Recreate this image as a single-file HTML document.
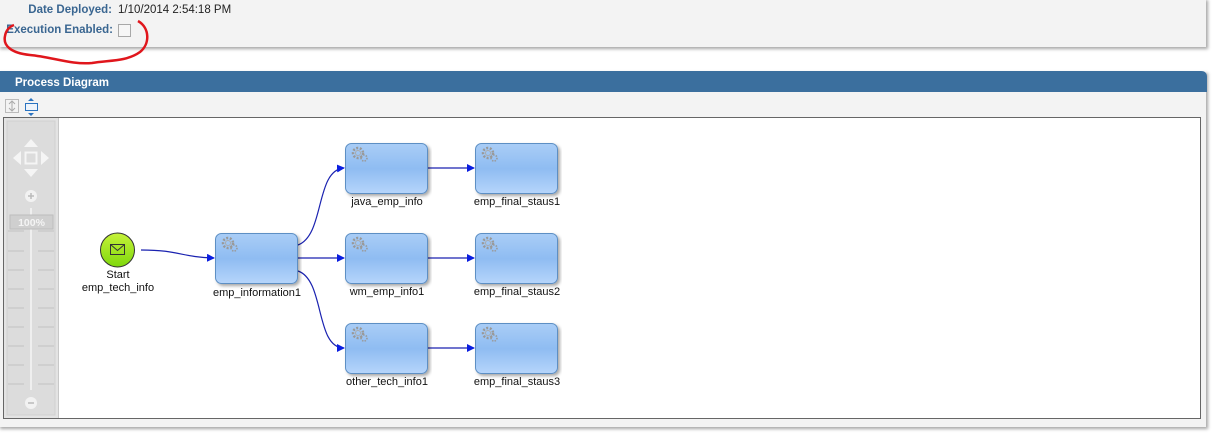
<!DOCTYPE html>
<html><head><meta charset="utf-8"><style>
html,body{margin:0;padding:0;background:#fff;width:1214px;height:444px;overflow:hidden;font-family:"Liberation Sans",Tahoma,sans-serif;}
</style></head><body>
<svg width="1214" height="444" viewBox="0 0 1214 444" xmlns="http://www.w3.org/2000/svg" style="display:block">
<defs>
<linearGradient id="bx" x1="0" y1="0" x2="0" y2="1">
<stop offset="0" stop-color="#a9cdf6"/><stop offset="0.5" stop-color="#8fbcf2"/><stop offset="1" stop-color="#b6d5fb"/></linearGradient>
<linearGradient id="gr" x1="0" y1="0" x2="0" y2="1">
<stop offset="0" stop-color="#c6f23a"/><stop offset="1" stop-color="#7fd80c"/></linearGradient>
<filter id="sh" x="-5%" y="-20%" width="110%" height="140%"><feDropShadow dx="2" dy="2" stdDeviation="1.5" flood-color="#000" flood-opacity="0.35"/></filter>
<marker id="ar" markerWidth="8" markerHeight="8" refX="7" refY="4" orient="auto" markerUnits="userSpaceOnUse"><path d="M0,0 L8,4 L0,8 Z" fill="#0a1ee0"/></marker>
<g id="gear"><circle r="5" fill="none" stroke="#999" stroke-width="2.5" stroke-dasharray="2 1.6"/><circle r="2.5" fill="none" stroke="#aaa" stroke-width="1"/><circle cx="6" cy="5" r="3" fill="none" stroke="#999" stroke-width="1.6" stroke-dasharray="1.4 1.2"/></g>
</defs>
<!-- top panel -->
<rect x="-2" y="-2" width="1208" height="49" fill="#f3f3f3" filter="url(#sh)"/>
<text x="112" y="13" font-size="11.5" font-weight="bold" fill="#3a6691" text-anchor="end">Date Deployed:</text>
<text x="118" y="13" font-size="11.5" fill="#222">1/10/2014 2:54:18 PM</text>
<text x="113" y="33" font-size="11.5" font-weight="bold" fill="#3a6691" text-anchor="end">Execution Enabled:</text>
<rect x="118.5" y="24.5" width="12" height="12" fill="#f6f6f6" stroke="#a8a8a8"/>
<path d="M138,21 C150,28 150,44 140,52 C126,62 108,60 92,63 C72,65 52,57 30,55 C10,53 3,45 5,36 C6,30 9,27 14,25" fill="none" stroke="#e0161c" stroke-width="2.5"/>
<!-- process panel -->
<rect x="-2" y="71" width="1208" height="356" fill="#f3f3f3" filter="url(#sh)"/>
<path d="M-2,71 H1201 Q1207,71 1207,77 V92 H-2 Z" fill="#3b6f9e"/>
<text x="15" y="86" font-size="11.5" font-weight="bold" fill="#fff">Process Diagram</text>
<rect x="5.5" y="99.5" width="13" height="13" fill="#f3f3f3" stroke="#bbb"/>
<path d="M12,101 V111 M9,104 l3,-3 3,3 M9,108 l3,3 3,-3" fill="none" stroke="#aaa"/>
<rect x="25.5" y="103.5" width="12" height="7" fill="#eef4fb" stroke="#2a73c0"/>
<path d="M31,98 l-3,3 h6 z M31,116 l-3,-3 h6 z" fill="#2a73c0"/>
<rect x="3.5" y="117.5" width="1197" height="301" fill="#fff" stroke="#666"/>
<rect x="4" y="118" width="55" height="300" fill="#e3e3e3"/>
<line x1="58.5" y1="118" x2="58.5" y2="418" stroke="#c8c8c8"/>
<rect x="7" y="121" width="48" height="294" fill="#dcdcdc" stroke="#d0d0d0"/>
<g fill="#f5f5f5">
<path d="M31,139 l-7,8 h14 z"/><path d="M31,177 l-7,-8 h14 z"/>
<path d="M13,158 l8,-7 v14 z"/><path d="M49,158 l-8,-7 v14 z"/>
</g>
<rect x="25.5" y="152.5" width="11" height="11" fill="none" stroke="#f5f5f5" stroke-width="2"/>
<circle cx="31" cy="196" r="6" fill="#f2f2f2"/><path d="M28,196 h6 M31,193 v6" stroke="#bbb" stroke-width="1.5"/>
<circle cx="31" cy="403" r="6" fill="#f2f2f2"/><path d="M28,403 h6" stroke="#bbb" stroke-width="1.5"/>
<line x1="31" y1="208" x2="31" y2="390" stroke="#f5f5f5" stroke-width="1.5"/>
<g stroke="#c2c2c2">
<path d="M8,251h16M38,251h16M8,270h16M38,270h16M8,289h16M38,289h16M8,308h16M38,308h16M8,327h16M38,327h16M8,346h16M38,346h16M8,365h16M38,365h16M8,384h16M38,384h16M8,231h16M38,231h16"/>
</g>
<rect x="10" y="215" width="43" height="14" fill="#cfcfcf" stroke="#bdbdbd"/>
<text x="31.5" y="226" font-size="10.5" font-weight="bold" fill="#f4f4f4" text-anchor="middle">100%</text>
<g fill="none" stroke="#1a22b0" stroke-width="1.2" marker-end="url(#ar)">
<path d="M141,250 C180,250 180,257 214,258"/>
<path d="M298,245 C325,235 315,170 344,168"/>
<path d="M298,258 H344"/>
<path d="M298,271 C325,280 315,348 344,348"/>
<path d="M428,168 H474"/>
<path d="M428,258 H474"/>
<path d="M428,348 H474"/>
</g>
<circle cx="117.5" cy="250" r="17" fill="url(#gr)" stroke="#333" stroke-width="1"/>
<rect x="110.5" y="244.5" width="14" height="10" fill="none" stroke="#333"/>
<path d="M110.5,244.5 L117.5,250.5 L124.5,244.5" fill="none" stroke="#333"/>
<g font-size="11" fill="#111" text-anchor="middle">
<text x="118" y="278">Start</text>
<text x="118" y="291">emp_tech_info</text>
</g>
<g>
<g transform="translate(215,233)"><rect x="0.5" y="0.5" width="82" height="50" rx="6" fill="url(#bx)" stroke="#5d8fc4" filter="url(#sh)"/><use href="#gear" x="13" y="10"/></g>
<g transform="translate(345,143)"><rect x="0.5" y="0.5" width="82" height="50" rx="6" fill="url(#bx)" stroke="#5d8fc4" filter="url(#sh)"/><use href="#gear" x="13" y="10"/></g>
<g transform="translate(475,143)"><rect x="0.5" y="0.5" width="82" height="50" rx="6" fill="url(#bx)" stroke="#5d8fc4" filter="url(#sh)"/><use href="#gear" x="13" y="10"/></g>
<g transform="translate(345,233)"><rect x="0.5" y="0.5" width="82" height="50" rx="6" fill="url(#bx)" stroke="#5d8fc4" filter="url(#sh)"/><use href="#gear" x="13" y="10"/></g>
<g transform="translate(475,233)"><rect x="0.5" y="0.5" width="82" height="50" rx="6" fill="url(#bx)" stroke="#5d8fc4" filter="url(#sh)"/><use href="#gear" x="13" y="10"/></g>
<g transform="translate(345,323)"><rect x="0.5" y="0.5" width="82" height="50" rx="6" fill="url(#bx)" stroke="#5d8fc4" filter="url(#sh)"/><use href="#gear" x="13" y="10"/></g>
<g transform="translate(475,323)"><rect x="0.5" y="0.5" width="82" height="50" rx="6" fill="url(#bx)" stroke="#5d8fc4" filter="url(#sh)"/><use href="#gear" x="13" y="10"/></g>
</g>
<g font-size="11" fill="#111" text-anchor="middle">
<text x="257" y="296">emp_information1</text>
<text x="387" y="205">java_emp_info</text>
<text x="517" y="205">emp_final_staus1</text>
<text x="387" y="295">wm_emp_info1</text>
<text x="517" y="295">emp_final_staus2</text>
<text x="387" y="385">other_tech_info1</text>
<text x="517" y="385">emp_final_staus3</text>
</g>
</svg>
</body></html>
